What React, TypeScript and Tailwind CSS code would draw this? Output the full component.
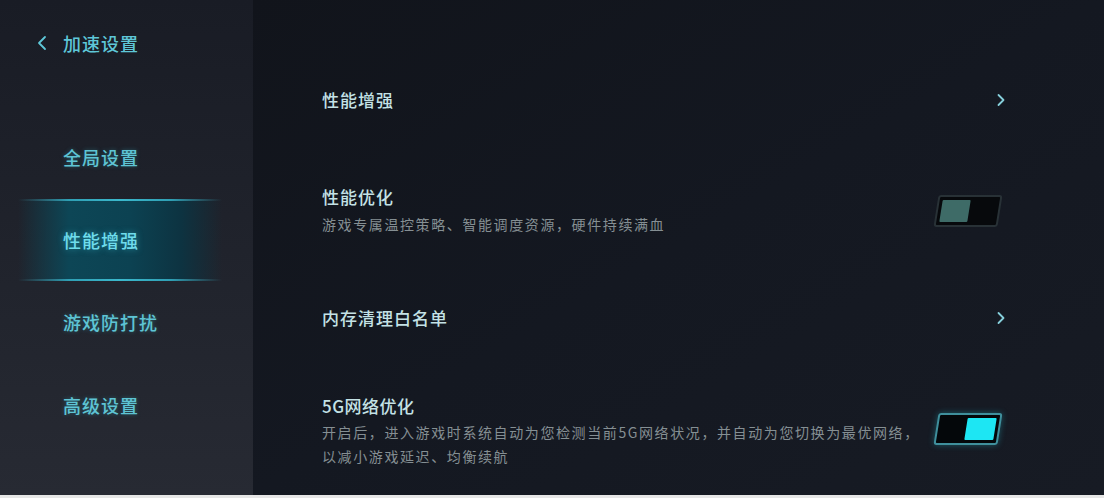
import React from 'react'

const font = { fontFamily: '"Noto Sans CJK SC", "Noto Sans", sans-serif' }

function Chevron() {
  return (
    <svg width="10" height="14" viewBox="0 0 10 14" className="mr-[-2px]">
      <polyline points="2.5,2 7.5,7 2.5,12" fill="none" stroke="#86cfdb" strokeWidth="1.8" strokeLinecap="round" strokeLinejoin="round" />
    </svg>
  )
}

function Toggle({ on }: { on: boolean }) {
  return (
    <div
      className={
        'w-[64px] h-[32px] skew-x-[-9deg] rounded-[3px] border-2 p-[3px] flex ' +
        (on
          ? 'border-[#3f8f9c] bg-[#04070a] justify-end shadow-[0_0_6px_rgba(40,200,220,0.35)]'
          : 'border-[#283136] bg-[#07090c] justify-start')
      }
    >
      <div className={on ? 'w-[29px] h-full bg-[#1de6f3] rounded-[1px]' : 'w-[28px] h-full bg-[#3e6b67] rounded-[1px]'} />
    </div>
  )
}

const navItems = ['全局设置', '性能增强', '游戏防打扰', '高级设置']

export default function App() {
  return (
    <div className="w-[1104px] h-[498px] overflow-hidden flex flex-col bg-[#e6e6e6]" style={font}>
      <div className="h-[495px] flex">
        <aside className="w-[253px] h-full flex flex-col bg-gradient-to-b from-[#191c25] to-[#272a33]">
          <div className="mt-[28px] h-[30px] flex items-center pl-[36px] text-[#5ec7d8]">
            <svg width="12" height="16" viewBox="0 0 12 16">
              <polyline points="9,2 3,8 9,14" fill="none" stroke="#5ec7d8" strokeWidth="1.8" strokeLinecap="round" strokeLinejoin="round" />
            </svg>
            <span className="ml-[15px] text-[18px] font-medium tracking-[1px]">加速设置</span>
          </div>
          <div className="mt-[58px] flex flex-col">
            {navItems.map((n, i) =>
              i === 1 ? (
                <div key={n} className="h-[82px] ml-[18px] w-[204px] flex flex-col">
                  <div className="h-[2px] bg-[linear-gradient(to_right,transparent,#2f9fb4_25%,#3bb8cc_50%,#2f9fb4_75%,transparent)]" />
                  <div className="flex-1 flex items-center pl-[45px] bg-[linear-gradient(to_right,rgba(14,60,74,0)_0%,#0d4656_25%,#0c4252_55%,#0d3341_80%,rgba(14,50,60,0)_100%)]">
                    <span className="text-[18px] font-medium tracking-[1px] text-[#6fdcec] [text-shadow:0_0_6px_rgba(60,210,230,0.5)]">{n}</span>
                  </div>
                  <div className="h-[2px] bg-[linear-gradient(to_right,transparent,#2f9fb4_25%,#3bb8cc_50%,#2f9fb4_75%,transparent)]" />
                </div>
              ) : (
                <div key={n} className="h-[83px] flex items-center pl-[63px]">
                  <span className="text-[18px] font-medium tracking-[1px] text-[#5ec4d4] [text-shadow:0_0_4px_rgba(60,200,220,0.35)]">{n}</span>
                </div>
              )
            )}
          </div>
        </aside>

        <main className="flex-1 h-full bg-gradient-to-br from-[#11141b] via-[#141821] to-[#171b24] flex flex-col pl-[69px] pr-[100px]">
          <div className="mt-[88px] h-[24px] flex items-center justify-between">
            <span className="text-[17px] font-medium tracking-[1px] text-[#c4e2e6]">性能增强</span>
            <Chevron />
          </div>

          <div className="mt-[74px] flex items-center justify-between">
            <div className="flex flex-col">
              <span className="h-[22px] leading-[22px] text-[17px] font-medium tracking-[1px] text-[#c4e2e6]">性能优化</span>
              <span className="mt-[5px] h-[22px] leading-[22px] text-[14px] tracking-[1.6px] text-[#858f93]">游戏专属温控策略、智能调度资源，硬件持续满血</span>
            </div>
            <div className="mr-[4px]">
              <Toggle on={false} />
            </div>
          </div>

          <div className="mt-[71px] h-[24px] flex items-center justify-between">
            <span className="text-[17px] font-medium tracking-[1px] text-[#c4e2e6]">内存清理白名单</span>
            <Chevron />
          </div>

          <div className="mt-[65px] flex items-center justify-between">
            <div className="flex flex-col">
              <span className="h-[22px] leading-[22px] text-[17px] font-medium tracking-[0.5px] text-[#c4e2e6]">5G网络优化</span>
              <span className="mt-[3px] leading-[24px] text-[14px] tracking-[1.6px] text-[#858f93] w-[600px]">
                开启后，进入游戏时系统自动为您检测当前5G网络状况，并自动为您切换为最优网络，<br />以减小游戏延迟、均衡续航
              </span>
            </div>
            <div className="mr-[4px] mt-[-6px]">
              <Toggle on={true} />
            </div>
          </div>
        </main>
      </div>
      <div className="h-[3px] bg-[#e6e6e6]" />
    </div>
  )
}
